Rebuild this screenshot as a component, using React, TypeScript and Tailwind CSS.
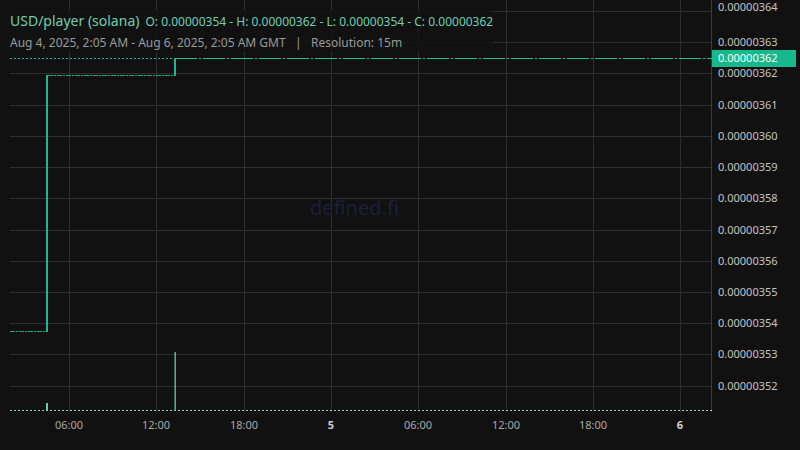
const hLines = [11, 42, 73, 105, 136, 167, 198, 230, 261, 292, 323, 354, 386];
const vLines = [69, 156, 244, 331, 418, 506, 593, 680];
const priceLabels = [
  { y: 7, t: '0.00000364' },
  { y: 42, t: '0.00000363' },
  { y: 73, t: '0.00000362' },
  { y: 105, t: '0.00000361' },
  { y: 136, t: '0.00000360' },
  { y: 167, t: '0.00000359' },
  { y: 198, t: '0.00000358' },
  { y: 230, t: '0.00000357' },
  { y: 261, t: '0.00000356' },
  { y: 292, t: '0.00000355' },
  { y: 323, t: '0.00000354' },
  { y: 354, t: '0.00000353' },
  { y: 386, t: '0.00000352' },
];
const timeLabels = [
  { x: 69, t: '06:00' },
  { x: 156, t: '12:00' },
  { x: 244, t: '18:00' },
  { x: 331, t: '5', bold: true },
  { x: 418, t: '06:00' },
  { x: 506, t: '12:00' },
  { x: 593, t: '18:00' },
  { x: 680, t: '6', bold: true },
];

export default function App() {
  return (
    <div className="w-[800px] h-[450px] bg-[#111111] relative overflow-hidden" style={{ fontFamily: '"Noto Sans", "Open Sans", sans-serif' }}>
      <div className="flex h-[450px]">
        <div className="w-[712px] flex flex-col">
          <svg width="712" height="412" className="block">
            {hLines.map((y) => (
              <line key={y} x1="10" x2="712" y1={y + 0.5} y2={y + 0.5} stroke="#2e2e2e" />
            ))}
            {vLines.map((x) => (
              <line key={x} x1={x + 0.5} x2={x + 0.5} y1="0" y2="412" stroke="#2e2e2e" />
            ))}
            <line x1="711.5" x2="711.5" y1="0" y2="412" stroke="#3a3a3a" />
            {/* price line */}
            <line x1="10" x2="175" y1="58.5" y2="58.5" stroke="#1fbf95" strokeDasharray="2 2" />
            <line x1="175" x2="712" y1="58.5" y2="58.5" stroke="#1fbf95" strokeDasharray="22 2 2 2" />
            {/* candles */}
            <line x1="10" x2="47" y1="331.5" y2="331.5" stroke="#1fa888" strokeDasharray="5 1 2 1" />
            <rect x="46" y="75" width="2" height="257" fill="#1fb590" />
            <line x1="48" x2="175" y1="75.5" y2="75.5" stroke="#1fa888" strokeDasharray="5 1 2 1" />
            <rect x="174" y="58" width="2" height="18" fill="#1fb590" />
            {/* volume */}
            <line x1="10" x2="712" y1="410.5" y2="410.5" stroke="#8fd8c0" strokeDasharray="2 2" />
            <rect x="46" y="403" width="2" height="8" fill="#5ed0b0" />
            <rect x="174.5" y="352" width="1.3" height="59" fill="#5ed0b0" />
          </svg>
          <div className="relative h-[38px]">
            {timeLabels.map((l) => (
              <span
                key={l.x + l.t}
                className={`absolute top-[5px] -translate-x-1/2 text-[11px] ${l.bold ? 'font-bold text-[#d0d0d0]' : 'text-[#a8a8a8]'}`}
                style={{ left: l.x }}
              >
                {l.t}
              </span>
            ))}
          </div>
        </div>
        <div className="relative flex-1">
          {priceLabels.map((l) => (
            <span key={l.y} className="absolute left-[6px] -translate-y-1/2 text-[11px] text-[#c4c4c4]" style={{ top: l.y }}>
              {l.t}
            </span>
          ))}
          <div className="absolute left-0 top-[50px] w-[84px] h-[17px] bg-[#15b98c] flex items-center pl-[6px] text-[11px] text-white">
            0.00000362
          </div>
        </div>
      </div>
      <div className="absolute left-[10px] top-[10px] flex flex-col gap-[3px] bg-[#111111]/80">
        <div className="flex items-baseline gap-[6px] text-[#6fd0b0]">
          <span className="text-[14px]">USD/player (solana)</span>
          <span className="text-[12px]">O: 0.00000354 - H: 0.00000362 - L: 0.00000354 - C: 0.00000362</span>
        </div>
        <div className="text-[12px] text-[#9a9a9a]">
          Aug 4, 2025, 2:05 AM - Aug 6, 2025, 2:05 AM GMT&nbsp;&nbsp;&nbsp;|&nbsp;&nbsp;&nbsp;Resolution: 15m
        </div>
      </div>
      <div className="absolute left-[310px] top-[193px] text-[20px] text-[#1c1f3a]">defined.fi</div>
    </div>
  );
}
